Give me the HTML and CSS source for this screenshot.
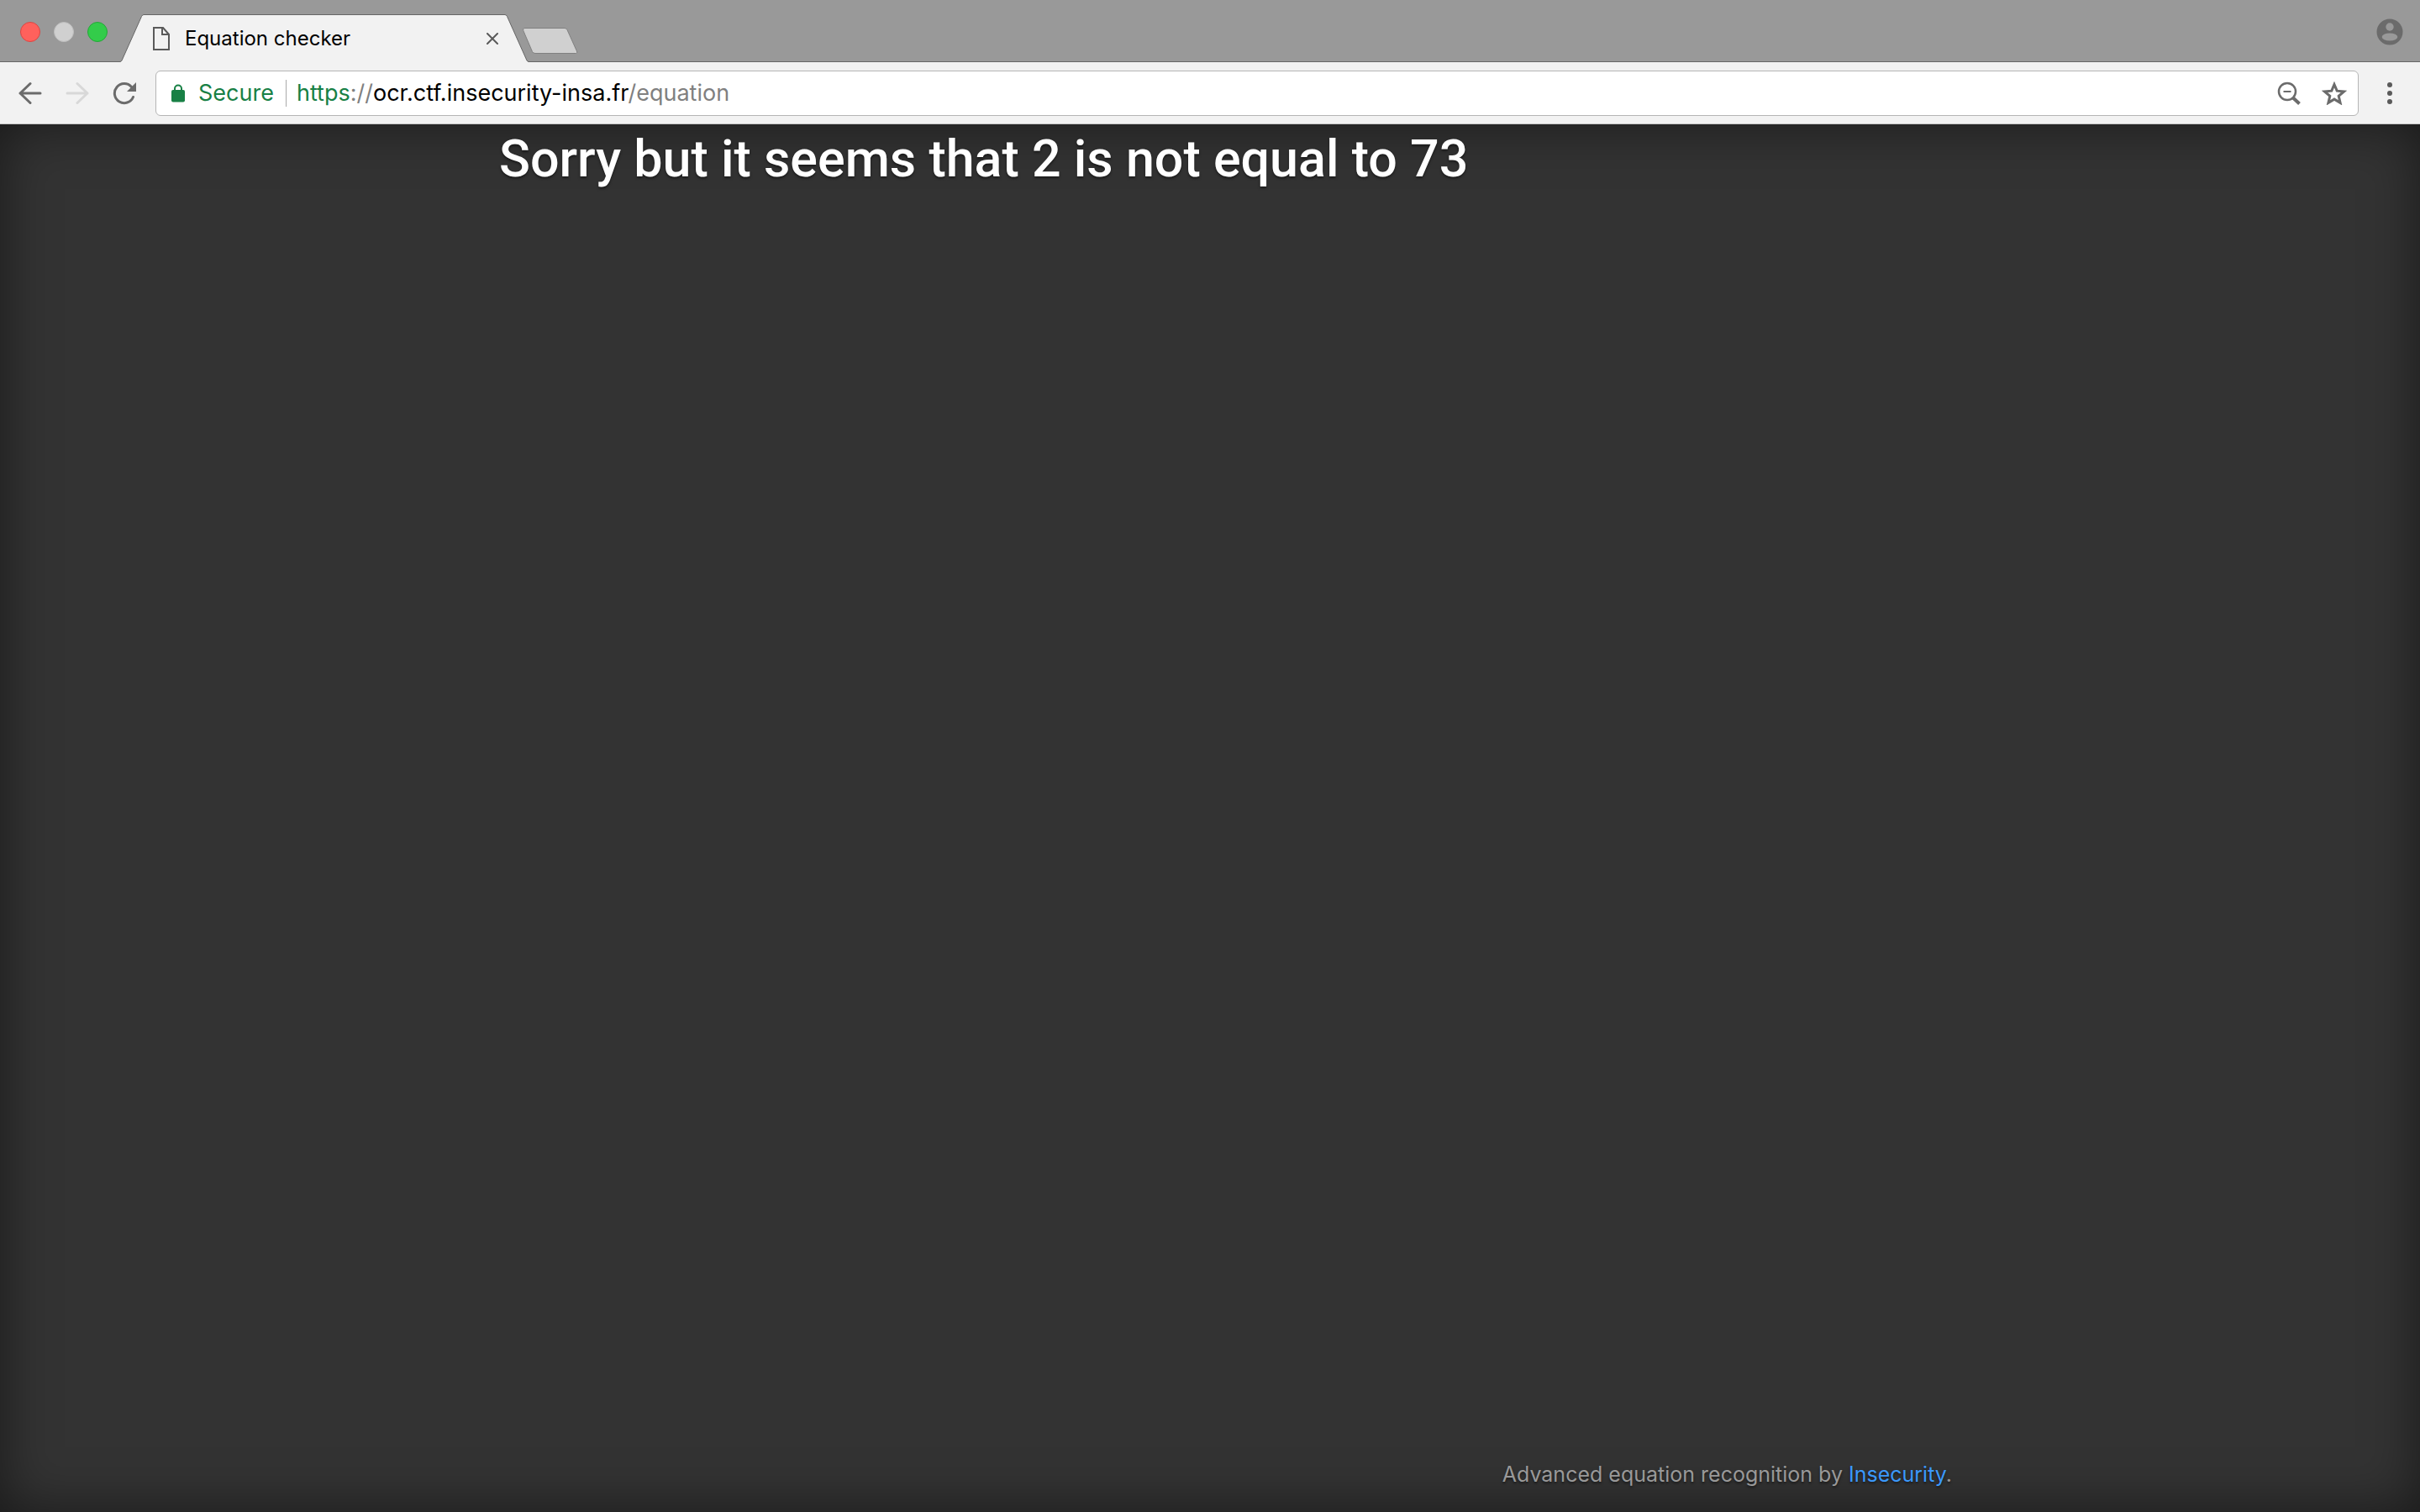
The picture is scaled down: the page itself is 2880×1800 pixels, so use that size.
FILE: index.html
```html
<!DOCTYPE html>
<html lang="en">
<head>
<meta charset="utf-8">
<title>Equation checker</title>
<link rel="stylesheet" href="styles.css">
</head>
<body>
<header class="chrome">
  <div class="tabstrip">
    <div class="lights">
      <button class="light light-close" aria-label="Close window"></button>
      <button class="light light-min" aria-label="Minimize window"></button>
      <button class="light light-max" aria-label="Zoom window"></button>
    </div>
    <div class="tab">
      <svg class="slant" width="28" height="57" viewBox="0 0 28 57" aria-hidden="true"><path d="M0 57V56.500Q1.500 56 2 55L25.500 2.500Q26.500 .5 28 .5V57Z" fill="#f2f2f2"/><path d="M0 56.500Q1.500 56 2 55L25.500 2.500Q26.500 .5 28 .5" fill="none" stroke="#666"/></svg>
      <div class="tab-body">
        <svg width="20" height="28" viewBox="0 0 20 28" fill="none" stroke="#5a5a5a" stroke-width="2" aria-hidden="true"><path d="M1 1H12L19 9V27H1Z"/><path d="M11 1V9H19"/></svg>
        <span class="tab-title">Equation checker</span>
        <button class="icon-button" aria-label="Close tab"><svg width="14" height="14" viewBox="0 0 14 14" stroke="#5a5a5a" stroke-width="2" stroke-linecap="round"><path d="M1 1L13 13M13 1L1 13"/></svg></button>
      </div>
      <svg class="slant" width="28" height="57" viewBox="0 0 28 57" aria-hidden="true"><path d="M28 57V56.500Q26.500 56 26 55L2.500 2.500Q1.500 .5 0 .5V57Z" fill="#f2f2f2"/><path d="M28 56.500Q26.500 56 26 55L2.500 2.500Q1.500 .5 0 .5" fill="none" stroke="#666"/></svg>
    </div>
    <button class="icon-button new-tab" aria-label="New tab"><svg width="66" height="32" viewBox="0 0 66 32"><path d="M2 .5H50Q52 .5 53 2.500L64.500 28Q65.500 30.500 63.500 30.500H15Q12.500 30.500 11.500 28.500L.8 3.500Q0 .5 2 .5Z" fill="#d0d0d0" stroke="#808080"/></svg></button>
    <button class="icon-button profile" aria-label="Profile"><svg width="32" height="32" viewBox="0 0 32 32"><circle cx="16" cy="16" r="15.500" fill="#6b6b6b"/><circle cx="16" cy="10" r="4.700" fill="#999"/><ellipse cx="16" cy="22" rx="9.300" ry="4.600" fill="#999"/></svg></button>
  </div>
  <div class="toolbar">
    <nav class="nav">
      <button class="icon-button" aria-label="Back"><svg width="28" height="28" viewBox="0 0 28 28" fill="none" stroke="#6b6b6b" stroke-width="3" stroke-linecap="round" stroke-linejoin="round"><path d="M26 14H2M14 2.500L2 14L14 25.500"/></svg></button>
      <button class="icon-button" aria-label="Forward" disabled><svg width="28" height="28" viewBox="0 0 28 28" fill="none" stroke="#d8d8d8" stroke-width="3" stroke-linecap="round" stroke-linejoin="round"><path d="M2 14H26M14 2.500L26 14L14 25.500"/></svg></button>
      <button class="icon-button" aria-label="Reload"><svg width="28" height="28" viewBox="0 0 28 28"><path d="M22.500 6.500A11.500 11.500 0 1 0 24.500 18.500" fill="none" stroke="#6b6b6b" stroke-width="3" stroke-linecap="round"/><path d="M28 1V12H17Z" fill="#6b6b6b"/></svg></button>
    </nav>
    <div class="omnibox">
      <input class="address" type="text" aria-label="Address">
      <svg width="16" height="22" viewBox="0 0 16 22" aria-hidden="true"><rect y="7" width="16" height="14.500" rx="2" fill="#188045"/><path d="M4 8V5.500A4 4 0 0 1 12 5.500V8" fill="none" stroke="#188045" stroke-width="2"/></svg>
      <span class="secure">Secure</span>
      <span class="url"><span class="scheme">https</span><span class="dim">://</span>ocr.ctf.insecurity-insa.fr<span class="dim">/equation</span></span>
      <div class="actions">
        <button class="icon-button" aria-label="Zoom"><svg width="28" height="28" viewBox="0 0 28 28" fill="none" stroke="#6b6b6b"><circle cx="12" cy="12" r="10" stroke-width="2.500"/><path d="M7.500 12H16.500" stroke-width="2"/><path d="M19 19.500L26.500 26.500" stroke-width="4"/></svg></button>
        <button class="icon-button" aria-label="Bookmark"><svg width="30" height="28" viewBox="0 0 30 28"><path d="M15 3.500L18.200 11.200L26.500 11.900L20.200 17.300L22.100 25.400L15 21.100L7.900 25.400L9.800 17.300L3.500 11.900L11.800 11.200Z" fill="none" stroke="#6b6b6b" stroke-width="3"/></svg></button>
      </div>
    </div>
    <button class="icon-button" aria-label="Menu"><svg width="6" height="28" viewBox="0 0 6 28" fill="#5a5a5a"><circle cx="3" cy="4" r="3"/><circle cx="3" cy="14" r="3"/><circle cx="3" cy="24" r="3"/></svg></button>
  </div>
</header>
<div class="page">
  <main class="content"><h2 class="message">Sorry but it seems that 2 is not equal to 73</h2></main>
  <footer class="footer"><p>Advanced equation recognition by <a href="#">Insecurity</a>.</p></footer>
</div>
</body>
</html>
```
FILE: styles.css
```css
* { box-sizing: border-box; }
body {
  margin: 0;
  min-height: 100vh;
  display: flex;
  flex-direction: column;
  font-family: Inter, "Liberation Sans", sans-serif;
  background: #333;
}
.icon-button { display: flex; padding: 0; border: 0; background: none; }
.tabstrip {
  display: flex;
  align-items: flex-end;
  height: 74px;
  padding: 0 24px;
  background: #999;
  box-shadow: inset 0 -1px #666;
}
.lights { display: flex; gap: 16px; margin-bottom: 24px; width: 119px; }
.light { width: 24px; height: 24px; padding: 0; border: 1px solid; border-radius: 50%; }
.light-close { background: #ff615c; border-color: #dc4542; }
.light-min { background: #d0d0d0; border-color: #bdbdbd; }
.light-max { background: #33cc4a; border-color: #24a838; }
.tab { display: flex; width: 486px; height: 57px; }
.slant { flex: none; }
.tab-body {
  flex: 1;
  display: flex;
  align-items: center;
  padding: 0 8px 0 11px;
  background: #f2f2f2;
  border-top: 1px solid #666;
}
.tab-title { flex: 1; margin-left: 18px; font-size: 24px; line-height: 32px; white-space: nowrap; }
.new-tab { margin: 0 auto 9px -7px; }
.profile { margin-bottom: 20px; margin-right: -4px; }
.toolbar {
  display: flex;
  align-items: center;
  gap: 34px;
  height: 74px;
  padding: 0 33px 0 22px;
  background: #f2f2f2;
  border-bottom: 1px solid #c8c8c8;
}
.nav { display: flex; gap: 28px; width: 129px; }
.omnibox {
  position: relative;
  flex: 1;
  display: flex;
  align-items: center;
  height: 54px;
  padding: 0 13px 0 18px;
  background: #fff;
  border: 1px solid #b5b5b5;
  border-radius: 6px;
  font-size: 27px;
  line-height: 32px;
}
.address { position: absolute; inset: 0; width: 100%; border: 0; background: none; }
.secure { margin-left: 16px; padding-right: 14px; border-right: 1px solid #aaa; color: #188045; }
.url { flex: 1; margin-left: 12px; }
.scheme { color: #188045; }
.dim { color: #808080; }
.actions { display: flex; gap: 25px; position: relative; }
.page {
  flex: 1;
  display: flex;
  flex-direction: column;
  justify-content: space-between;
  color: #fff;
  background: #333;
  box-shadow: inset 0 0 64px rgba(0, 0, 0, .5);
  text-shadow: 0 2px 3px rgba(0, 0, 0, .5);
}
.content { width: 100%; max-width: 1692px; margin: 0 auto; }
.message { margin: 0; font-family: Roboto, "Liberation Sans", sans-serif; font-size: 61px; line-height: 83px; font-weight: 500; }
.footer { width: 100%; max-width: 1766px; margin: 0 auto; text-align: right; color: #999; }
.footer p { margin: 0 0 29px; font-size: 25px; line-height: 32px; }
.footer a { color: #3b99fc; text-decoration: none; }
```
